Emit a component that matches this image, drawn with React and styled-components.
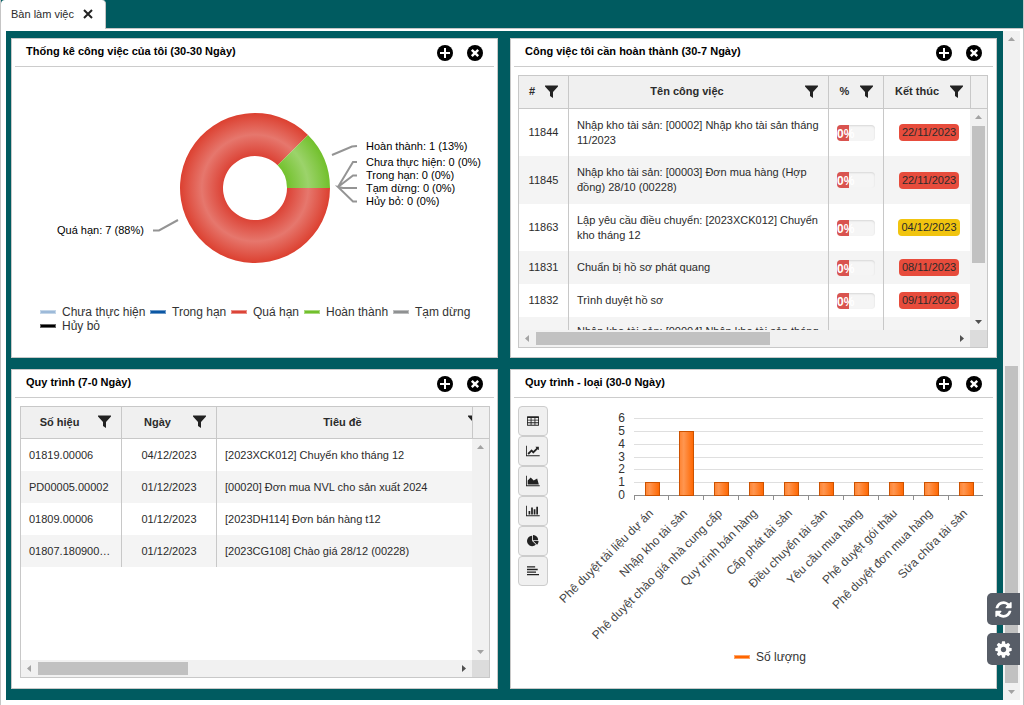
import React from "react";
import styled, { createGlobalStyle } from "styled-components";

const GlobalStyle = createGlobalStyle`
  * {
    box-sizing: border-box;
  }
  body {
    margin: 0;
    background-color: #fff;
    color: #2b2b2b;
    font-family: "Liberation Sans", Arial, sans-serif;
    font-size: 11px;
  }
  button {
    margin: 0;
    padding: 0;
    border: 0;
    background: none;
    color: inherit;
    font: inherit;
    cursor: pointer;
  }
`;

const Page = styled.div`
  display: flex;
  flex-direction: column;
  height: 100vh;
  min-height: 600px;
  border: solid #c5c5c5;
  border-width: 0 1px;
`;

const TabBar = styled.nav`
  flex: none;
  display: flex;
  height: 29px;
  background-color: #005b60;
  border-bottom: 1px solid #c5c5c5;
`;

const Tab = styled.div`
  display: flex;
  align-items: center;
  gap: 9px;
  height: 29px;
  padding: 0 12px 2px 10px;
  background-color: #fff;
  border-right: 1px solid #c5c5c5;
  border-radius: 4px 4px 0 0;
`;

const TabClose = styled.button`
  display: flex;
  svg {
    width: 10px;
    height: 10px;
  }
`;

const Workspace = styled.main`
  position: relative;
  flex: 1;
  display: flex;
  min-height: 0;
  margin: 2px 3px 5px 5px;
`;

const Board = styled.div`
  flex: 1;
  min-width: 0;
  display: grid;
  grid-template-columns: repeat(2, minmax(0, 1fr));
  grid-template-rows: repeat(2, minmax(0, 1fr));
  gap: 11px 12px;
  padding: 7px 6px 11px 5px;
  background-color: #005b60;
`;

const PanelBox = styled.section`
  display: flex;
  flex-direction: column;
  min-width: 0;
  min-height: 0;
  background-color: #fff;
  border: 1px solid #c8c8c8;
`;

const PanelHeader = styled.header`
  flex: none;
  display: flex;
  align-items: center;
  gap: 14px;
  height: 28px;
  margin: 0 3px;
  padding: 0 11px;
  border-bottom: 1px solid #ccc;
`;

const PanelTitle = styled.h2`
  flex: 1;
  margin: 0;
  padding-bottom: 3px;
  color: #000;
  font-size: 11px;
  font-weight: 700;
`;

const RoundButton = styled.button`
  display: flex;
  color: #000;
  svg {
    width: 16px;
    height: 16px;
  }
`;

const GridArea = styled.div`
  flex: 1;
  display: flex;
  min-height: 0;
  padding: ${(p) => p.$inset};
`;

const GridFrame = styled.div`
  flex: 1;
  min-width: 0;
  display: grid;
  grid-template-columns: minmax(0, 1fr) 17px;
  grid-template-rows: ${(p) => p.$head}px minmax(0, 1fr) 17px;
  border: 1px solid #c8c8c8;
`;

const Viewport = styled.div`
  grid-row: 1 / 3;
  overflow: hidden;
`;

const HeadFiller = styled.div`
  background-color: #f0f0f0;
  border-left: 1px solid #c8c8c8;
  border-bottom: 1px solid #c8c8c8;
`;

const Corner = styled.div`
  background-color: #dcdcdc;
`;

const Table = styled.table`
  width: calc(100% + ${(p) => p.$extra}px);
  table-layout: fixed;
  border-collapse: separate;
  border-spacing: 0;
`;

const HeadCell = styled.th`
  width: ${(p) => (p.$width ? `${p.$width}px` : "auto")};
  height: ${(p) => p.$head}px;
  padding: 0;
  background-color: #f0f0f0;
  border-right: 1px solid #c8c8c8;
  border-bottom: 1px solid #c8c8c8;
`;

const HeadContent = styled.div`
  display: flex;
  align-items: center;
  padding: 0 10px 2px 0;
  span {
    flex: 1;
  }
`;

const FilterButton = styled.button`
  display: flex;
  svg {
    width: 13px;
    height: 13px;
  }
`;

const Row = styled.tr`
  height: ${(p) => p.$height}px;
  &:nth-child(even) {
    background-color: #f4f4f4;
  }
`;

const Cell = styled.td`
  padding: ${(p) => (p.$center ? "0" : "0 8px")};
  border-right: 1px solid #c8c8c8;
  line-height: 15px;
  text-align: ${(p) => (p.$center ? "center" : "left")};
  white-space: ${(p) => (p.$wrap ? "normal" : "nowrap")};
  overflow: hidden;
  text-overflow: ellipsis;
  &:last-child {
    border-right: 0;
  }
`;

const Badge = styled.span`
  display: inline-block;
  padding: 1px 3px;
  border-radius: 4px;
  background-color: ${(p) => (p.$warn ? "#f1c40f" : "#e74c3c")};
`;

const Progress = styled.div`
  height: 16px;
  border-radius: 4px;
  background-color: #f5f5f5;
  box-shadow: inset 0 1px 2px rgba(0, 0, 0, 0.12);
  overflow: hidden;
`;

const ProgressFill = styled.div`
  width: 12px;
  height: 16px;
  background-color: #d9534f;
  color: #fff;
  font-size: 12px;
  font-weight: 700;
  line-height: 19px;
`;

const Bar = styled.div`
  display: flex;
  flex-direction: ${(p) => (p.$vertical ? "column" : "row")};
  flex: none;
  ${(p) => p.$vertical && "width: 17px;"}
  min-width: 0;
  min-height: 0;
  background-color: #f1f1f1;
`;

const BarTrack = styled.div`
  flex: 1;
  display: flex;
  flex-direction: ${(p) => (p.$vertical ? "column" : "row")};
  justify-content: ${(p) => (p.$end ? "flex-end" : "flex-start")};
  padding: ${(p) => (p.$vertical ? "0 2px" : "2px 0")};
`;

const BarThumb = styled.div`
  flex: 0 0 ${(p) => p.$size}%;
  background-color: #c1c1c1;
`;

const BarArrow = styled.svg`
  flex: none;
  width: 17px;
  height: 17px;
  fill: ${(p) => (p.$active ? "#505050" : "#a3a3a3")};
`;

const ChartSvg = styled.svg`
  display: block;
  flex: 1;
  min-width: 0;
  min-height: 0;
  font-family: "Liberation Sans", Arial, sans-serif;
  font-size: 12px;
`;

const ChartArea = styled.div`
  flex: 1;
  display: flex;
  min-height: 0;
`;

const ChartTools = styled.div`
  flex: none;
  display: flex;
  flex-direction: column;
  padding: 8px 0 0 7px;
`;

const ToolButton = styled.button`
  display: flex;
  align-items: center;
  justify-content: center;
  width: 30px;
  height: 30px;
  background-color: #f0f0f0;
  border: 1px solid #ccc;
  border-radius: 4px;
  color: #222;
`;

const SideButtons = styled.div`
  position: absolute;
  right: 0;
  bottom: 35px;
  display: flex;
  flex-direction: column;
  gap: 8px;
`;

const SideButton = styled.button`
  display: flex;
  align-items: center;
  justify-content: center;
  width: 33px;
  height: 32px;
  background-color: #575d67;
  border-radius: 5px 0 0 5px;
  color: #fff;
  svg {
    width: 19px;
    height: 19px;
  }
`;

const arrows = {
  up: "M5 10h7l-3.500-4z",
  down: "M5 7h7l-3.500 4z",
  left: "M10 5v7l-4-3.500z",
  right: "M7 5v7l4-3.500z",
};

const ScrollBar = ({ vertical, size, end, startActive, endActive }) => (
  <Bar $vertical={vertical} aria-hidden="true">
    <BarArrow viewBox="0 0 17 17" $active={startActive}>
      <path d={vertical ? arrows.up : arrows.left} />
    </BarArrow>
    <BarTrack $vertical={vertical} $end={end}>
      {size > 0 && <BarThumb $size={size} />}
    </BarTrack>
    <BarArrow viewBox="0 0 17 17" $active={endActive}>
      <path d={vertical ? arrows.down : arrows.right} />
    </BarArrow>
  </Bar>
);

const FilterIcon = () => (
  <svg viewBox="0 0 13 13" fill="#222">
    <path d="M0 0.500h13v1L8 7v6L5 11V7L0 1.500z" />
  </svg>
);

const Panel = ({ title, children }) => (
  <PanelBox>
    <PanelHeader>
      <PanelTitle>{title}</PanelTitle>
      <RoundButton aria-label="Thêm">
        <svg viewBox="0 0 16 16">
          <circle cx="8" cy="8" r="8" fill="currentColor" />
          <path d="M8 3v10M3 8h10" stroke="#fff" strokeWidth="2" />
        </svg>
      </RoundButton>
      <RoundButton aria-label="Đóng">
        <svg viewBox="0 0 16 16">
          <circle cx="8" cy="8" r="8" fill="currentColor" />
          <path d="M4.800 4.800l6.400 6.400M11.200 4.800l-6.400 6.400" stroke="#fff" strokeWidth="2.400" />
        </svg>
      </RoundButton>
    </PanelHeader>
    {children}
  </PanelBox>
);

const DataGrid = ({ columns, head, extra, inset, vertical, horizontal, children }) => (
  <GridArea $inset={inset}>
    <GridFrame $head={head}>
      <Viewport>
        <Table $extra={extra}>
          <thead>
            <tr>
              {columns.map((column) => (
                <HeadCell key={column.name} $width={column.width} $head={head}>
                  <HeadContent>
                    <span>{column.name}</span>
                    <FilterButton aria-label={`Lọc ${column.name}`}>
                      <FilterIcon />
                    </FilterButton>
                  </HeadContent>
                </HeadCell>
              ))}
            </tr>
          </thead>
          <tbody>{children}</tbody>
        </Table>
      </Viewport>
      <HeadFiller />
      <ScrollBar vertical size={vertical} endActive={vertical > 0} />
      <ScrollBar size={horizontal} endActive />
      <Corner />
    </GridFrame>
  </GridArea>
);

const taskColumns = [
  { name: "#", width: 50 },
  { name: "Tên công việc" },
  { name: "%", width: 55 },
  { name: "Kết thúc", width: 90 },
];

const tasks = [
  { id: 11844, name: "Nhập kho tài sản: [00002] Nhập kho tài sản tháng 11/2023", end: "22/11/2023", height: 47 },
  { id: 11845, name: "Nhập kho tài sản: [00003] Đơn mua hàng (Hợp đồng) 28/10 (00228)", end: "22/11/2023", height: 48 },
  { id: 11863, name: "Lập yêu cầu điều chuyển: [2023XCK012] Chuyển kho tháng 12", end: "04/12/2023", height: 47, warn: true },
  { id: 11831, name: "Chuẩn bị hồ sơ phát quang", end: "08/11/2023", height: 33 },
  { id: 11832, name: "Trình duyệt hồ sơ", end: "09/11/2023", height: 33 },
  { id: 11834, name: "Nhập kho tài sản: [00004] Nhập kho tài sản tháng 11/2023", end: "22/11/2023", height: 44 },
];

const processColumns = [
  { name: "Số hiệu", width: 101 },
  { name: "Ngày", width: 95 },
  { name: "Tiêu đề" },
];

const processes = [
  ["01819.00006", "04/12/2023", "[2023XCK012] Chuyển kho tháng 12"],
  ["PD00005.00002", "01/12/2023", "[00020] Đơn mua NVL cho sản xuất 2024"],
  ["01809.00006", "01/12/2023", "[2023DH114] Đơn bán hàng t12"],
  ["01807.180900.00001", "01/12/2023", "[2023CG108] Chào giá 28/12 (00228)"],
];

const statusLegend = [
  { x: 28, y: 245, color: "#9dbad9", label: "Chưa thực hiện" },
  { x: 138, y: 245, color: "#0b57a4", label: "Trong hạn" },
  { x: 219, y: 245, color: "#dc4437", label: "Quá hạn" },
  { x: 292, y: 245, color: "#72c02c", label: "Hoàn thành" },
  { x: 381, y: 245, color: "#8f9192", label: "Tạm dừng" },
  { x: 28, y: 259, color: "#000", label: "Hủy bỏ" },
];

const statusLabels = [
  { x: 354, y: 83, text: "Hoàn thành: 1 (13%)" },
  { x: 354, y: 99, text: "Chưa thực hiện: 0 (0%)" },
  { x: 354, y: 112, text: "Trong hạn: 0 (0%)" },
  { x: 354, y: 125, text: "Tạm dừng: 0 (0%)" },
  { x: 354, y: 138, text: "Hủy bỏ: 0 (0%)" },
  { x: 45, y: 167, text: "Quá hạn: 7 (88%)" },
];

const LegendItem = ({ x, y, color, label }) => (
  <g>
    <rect x={x} y={y - 2} width="16" height="4" fill={color} opacity="0.6" />
    <rect x={x + 1} y={y - 1} width="14" height="2" fill={color} />
    <text x={x + 22} y={y + 4} fill="#333">
      {label}
    </text>
  </g>
);

const StatusChart = () => (
  <ChartArea>
    <ChartSvg viewBox="0 0 485 290" role="img" aria-label="Thống kê công việc">
      <defs>
        <radialGradient id="late" gradientUnits="userSpaceOnUse" cx="243" cy="121" r="75">
          <stop offset="0.430" stopColor="#dc4336" />
          <stop offset="0.710" stopColor="#e6776d" />
          <stop offset="1" stopColor="#dc4030" />
        </radialGradient>
        <radialGradient id="done" gradientUnits="userSpaceOnUse" cx="243" cy="121" r="75">
          <stop offset="0.430" stopColor="#74c22e" />
          <stop offset="0.710" stopColor="#9cd36b" />
          <stop offset="1" stopColor="#72c02c" />
        </radialGradient>
      </defs>
      <path
        d="M318 121A75 75 0 1 1 296.030 67.970L265.630 98.370A32 32 0 1 0 275 121z"
        fill="url(#late)"
      />
      <path
        d="M296.030 67.970A75 75 0 0 1 318 121H275A32 32 0 0 0 265.630 98.370z"
        fill="url(#done)"
      />
      <g fill="none" stroke="#949494" strokeWidth="2">
        <path d="M320 88L340 79.500L345 79" />
        <path d="M345 95H341L326 120L341 108.500H345" />
        <path d="M345 134.500H341L326 120L331 121H345" />
        <path d="M141 163.500H147L166 153" />
      </g>
      <g fill="#000" fontSize="11">
        {statusLabels.map((label) => (
          <text key={label.text} x={label.x} y={label.y}>
            {label.text}
          </text>
        ))}
      </g>
      {statusLegend.map((item) => (
        <LegendItem key={item.label} {...item} />
      ))}
    </ChartSvg>
  </ChartArea>
);

const typeCounts = [
  { label: "Phê duyệt tài liệu dự án", count: 1 },
  { label: "Nhập kho tài sản", count: 5 },
  { label: "Phê duyệt chào giá nhà cung cấp", count: 1 },
  { label: "Quy trình bán hàng", count: 1 },
  { label: "Cấp phát tài sản", count: 1 },
  { label: "Điều chuyển tài sản", count: 1 },
  { label: "Yêu cầu mua hàng", count: 1 },
  { label: "Phê duyệt gói thầu", count: 1 },
  { label: "Phê duyệt đơn mua hàng", count: 1 },
  { label: "Sửa chữa tài sản", count: 1 },
];

const axisLeft = 86;
const axisRight = 435;
const axisBottom = 97;
const step = (axisRight - axisLeft) / typeCounts.length;
const levelY = (level) => Math.round(axisBottom - level * 12.8);

const TypeChart = () => (
  <ChartSvg viewBox="0 0 448 290" role="img" aria-label="Quy trình theo loại">
    <defs>
      <linearGradient id="bar">
        <stop offset="0" stopColor="#ff8331" />
        <stop offset="0.300" stopColor="#ff9650" />
        <stop offset="1" stopColor="#ff6600" />
      </linearGradient>
    </defs>
    {[0, 1, 2, 3, 4, 5, 6].map((level) => (
      <g key={level}>
        <rect
          x={axisLeft}
          y={levelY(level)}
          width={axisRight - axisLeft}
          height="1"
          fill={level === 0 ? "#8e8e8e" : "#dfdfdf"}
        />
        <text x="77" y={levelY(level) + 4} textAnchor="end" fill="#333">
          {level}
        </text>
      </g>
    ))}
    {typeCounts.map((item, index) => {
      const x = Math.floor(axisLeft + index * step);
      const top = levelY(item.count);
      return (
        <g key={item.label}>
          <rect x={x} y={axisBottom} width="1" height="5" fill="#8e8e8e" />
          <rect
            x={x + 11.5}
            y={top + 0.5}
            width="14"
            height={axisBottom - top}
            fill="url(#bar)"
            stroke="#cc5200"
          />
          <text
            transform={`translate(${x + 20} 116) rotate(-45)`}
            textAnchor="end"
            fill="#444"
          >
            {item.label}
          </text>
        </g>
      );
    })}
    <LegendItem x={186} y={259} color="#ff6600" label="Số lượng" />
  </ChartSvg>
);

const chartTools = [
  {
    name: "Bảng",
    box: "0 0 1792 1792",
    path: "M64 192h1664q64 0 64 64v1280q0 64-64 64H64q-64 0-64-64V256q0-64 64-64zM128 448v256h416V448zm544 0v256h448V448zm576 0v256h416V448zM128 832v256h416V832zm544 0v256h448V832zm576 0v256h416V832zM128 1216v256h416v-256zm544 0v256h448v-256zm576 0v256h416v-256z",
  },
  {
    name: "Đường",
    box: "0 0 2048 1792",
    path: "M2048 1536v128h-2048v-1536h128v1408h1920zm-128-1248v435q0 21-19.500 29.500t-35.500-7.500l-121-121-633 633q-10 10-23 10t-23-10l-233-233-416 416-192-192 585-585q10-10 23-10t23 10l233 233 464-464-121-121q-16-16-7.500-35.500t29.500-19.500h435q14 0 23 9t9 23z",
  },
  {
    name: "Vùng",
    box: "0 0 2048 1792",
    path: "M2048 1536v128H0V128h128v1408h1920zM1664 512l256 896H256V832l448-448 448 448z",
  },
  {
    name: "Cột",
    box: "0 0 2048 1792",
    path: "M640 896v512h-256v-512h256zm384-512v1024h-256v-1024h256zm1024 1152v128h-2048v-1536h128v1408h1920zm-640-896v768h-256v-768h256zm384-384v1152h-256v-1152h256z",
  },
  {
    name: "Tròn",
    box: "0 0 1792 1792",
    path: "M768 890l546 546q-106 108-247.500 168t-298.500 60q-209 0-385.500-103t-279.500-279.500-103-385.500 103-385.500 279.500-279.500 385.500-103v762zm187 6h773q0 157-60 298.500t-168 247.500zm709-128h-768v-768q209 0 385.500 103t279.500 279.500 103 385.500z",
  },
  {
    name: "Thanh",
    box: "0 0 1792 1792",
    path: "M0 192h1216v192H0zM0 576h1600v192H0zM0 960h1344v192H0zM0 1344h1792v192H0z",
  },
];

const refreshPath =
  "M1639 1056q0 5-1 7-64 268-268 434.500t-478 166.500q-146 0-282.500-55t-243.500-157l-129 129q-19 19-45 19t-45-19-19-45v-448q0-26 19-45t45-19h448q26 0 45 19t19 45-19 45l-137 137q71 66 161 102t187 36q134 0 250-65t186-179q11-17 53-117 8-23 30-23h192q13 0 22.500 9.500t9.500 22.500zm25-800v448q0 26-19 45t-45 19h-448q-26 0-45-19t-19-45 19-45l138-138q-148-137-349-137-134 0-250 65t-186 179q-11 17-53 117-8 23-30 23h-199q-13 0-22.500-9.500t-9.500-22.500v-7q65-268 270-434.500t480-166.500q146 0 284 55.500t245 156.500l130-129q19-19 45-19t45 19 19 45z";

const cogPath =
  "M1152 896q0-106-75-181t-181-75-181 75-75 181 75 181 181 75 181-75 75-181zm512-109v222q0 12-8 23t-20 13l-185 28q-19 54-39 91 35 50 107 138 10 12 10 25t-9 23q-27 37-99 108t-94 71q-12 0-26-9l-138-108q-44 23-91 38-16 136-29 186-7 28-36 28h-222q-14 0-24.500-8.500t-11.500-21.500l-28-184q-49-16-90-37l-141 107q-10 9-25 9-14 0-25-11-126-114-165-168-7-10-7-23 0-12 8-23 15-21 51-66.500t54-70.500q-27-50-41-99l-183-27q-13-2-21-12.500t-8-23.500v-222q0-12 8-23t19-13l186-28q14-46 39-92-40-57-107-138-10-12-10-24 0-10 9-23 26-36 98.500-107.500t94.500-71.500q13 0 26 10l138 107q44-23 91-38 16-136 29-186 7-28 36-28h222q14 0 24.500 8.500t11.500 21.500l28 184q49 16 90 37l142-107q9-9 24-9 13 0 25 10 129 119 165 170 7 8 7 22 0 12-8 23-15 21-51 66.500t-54 70.500q26 50 41 98l183 28q13 2 21 12.500t8 23.500z";

const App = () => {
  return (
    <>
      <GlobalStyle />
      <Page>
        <TabBar>
          <Tab>
            <span>Bàn làm việc</span>
            <TabClose aria-label="Đóng thẻ">
              <svg viewBox="0 0 10 10">
                <path d="M1 1l8 8M9 1l-8 8" stroke="#222" strokeWidth="2" />
              </svg>
            </TabClose>
          </Tab>
        </TabBar>
        <Workspace>
          <Board>
            <Panel title="Thống kê công việc của tôi (30-30 Ngày)">
              <StatusChart />
            </Panel>
            <Panel title="Công việc tôi cần hoàn thành (30-7 Ngày)">
              <DataGrid
                columns={taskColumns}
                head={33}
                extra={4}
                inset="8px 8px 9px 7px"
                vertical={73}
                horizontal={56}
              >
                {tasks.map((task) => (
                  <Row key={task.id} $height={task.height}>
                    <Cell $center>{task.id}</Cell>
                    <Cell $wrap>{task.name}</Cell>
                    <Cell>
                      <Progress>
                        <ProgressFill>0%</ProgressFill>
                      </Progress>
                    </Cell>
                    <Cell $center>
                      <Badge $warn={task.warn}>{task.end}</Badge>
                    </Cell>
                  </Row>
                ))}
              </DataGrid>
            </Panel>
            <Panel title="Quy trình (7-0 Ngày)">
              <DataGrid
                columns={processColumns}
                head={32}
                extra={20}
                inset="8px 7px 10px 8px"
                vertical={0}
                horizontal={36}
              >
                {processes.map(([code, date, name]) => (
                  <Row key={code} $height={32}>
                    <Cell>{code}</Cell>
                    <Cell $center>{date}</Cell>
                    <Cell>{name}</Cell>
                  </Row>
                ))}
              </DataGrid>
            </Panel>
            <Panel title="Quy trình - loại (30-0 Ngày)">
              <ChartArea>
                <ChartTools>
                  {chartTools.map((tool) => (
                    <ToolButton key={tool.name} aria-label={tool.name}>
                      <svg viewBox={tool.box} height="12" fill="currentColor" fillRule="evenodd">
                        <path d={tool.path} />
                      </svg>
                    </ToolButton>
                  ))}
                </ChartTools>
                <TypeChart />
              </ChartArea>
            </Panel>
          </Board>
          <ScrollBar vertical size={50} end />
          <SideButtons>
            <SideButton aria-label="Làm mới">
              <svg viewBox="0 0 1792 1792" fill="currentColor">
                <path d={refreshPath} />
              </svg>
            </SideButton>
            <SideButton aria-label="Cài đặt">
              <svg viewBox="0 0 1792 1792" fill="currentColor">
                <path d={cogPath} />
              </svg>
            </SideButton>
          </SideButtons>
        </Workspace>
      </Page>
    </>
  );
};

export default App;
